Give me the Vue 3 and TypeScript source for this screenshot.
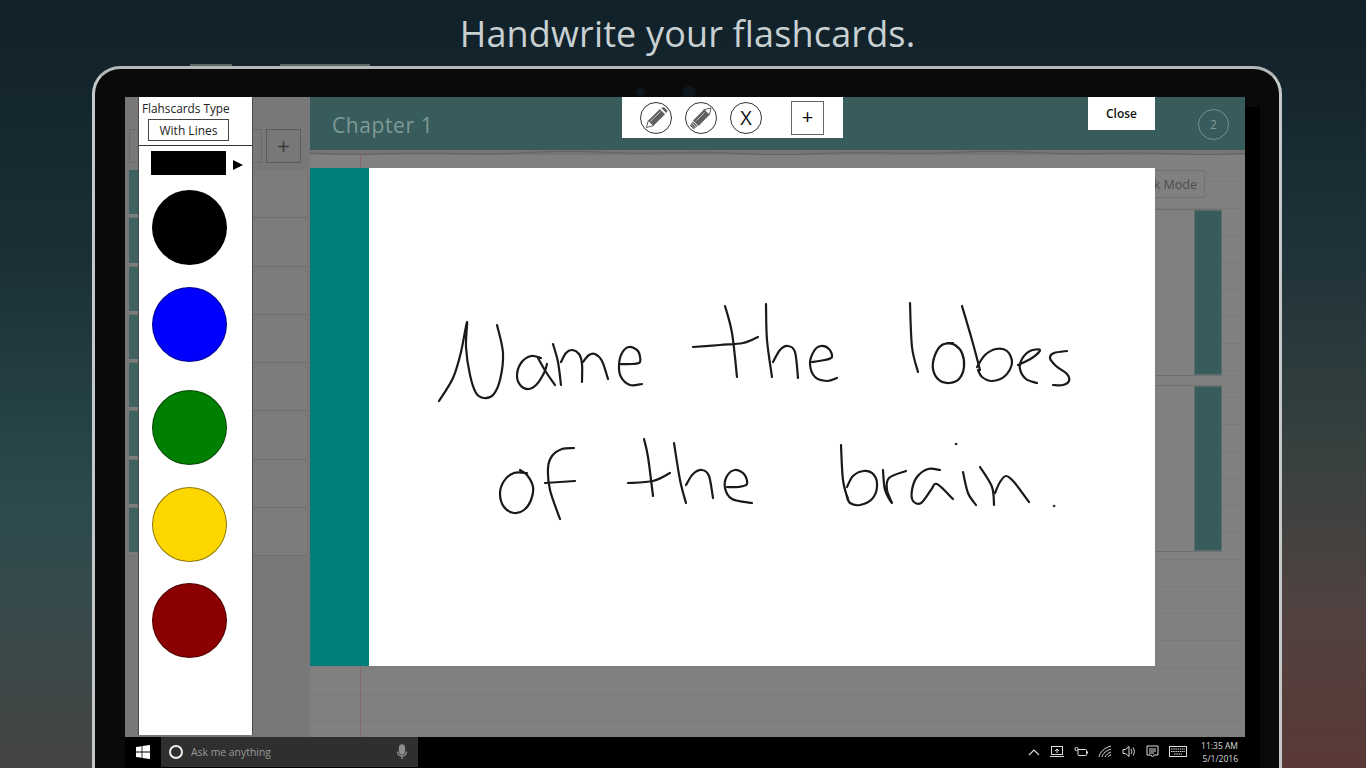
<script setup lang="ts">
type Pt = [number, number]

const rows = Array.from({ length: 8 }, (_, i) => i)
const swatches = ['#000000', '#0000ff', '#008000', '#ffd700', '#8b0000']

// ink strokes, in page coordinates (viewBox lines them up with the card)
const strokes: Pt[][] = [
  // first line
  [[439, 401], [453, 378], [461, 352], [467, 322], [466, 347], [470, 375], [476, 393], [484, 398], [493, 395], [500, 380], [503, 353], [497, 325]],
  [[541, 358], [531, 356], [521, 363], [517, 376], [521, 386], [529, 389], [537, 384], [544, 373], [547, 364]],
  [[538, 358], [546, 372], [555, 385]],
  [[553, 344], [558, 362], [561, 385]],
  [[561, 362], [566, 353], [572, 350], [579, 354], [582, 364], [582, 382]],
  [[583, 362], [589, 355], [595, 354], [602, 361], [608, 379]],
  [[620, 364], [632, 364], [640, 362], [638, 351], [629, 347], [622, 353], [619, 365], [621, 377], [630, 385], [642, 384]],
  [[693, 347], [720, 345], [743, 343], [758, 337]],
  [[725, 306], [732, 333], [737, 377]],
  [[766, 304], [767, 340], [772, 377]],
  [[773, 362], [780, 350], [788, 346], [795, 352], [798, 378]],
  [[812, 362], [825, 360], [832, 357], [829, 349], [821, 346], [814, 351], [810, 364], [815, 377], [827, 381], [837, 378]],
  [[910, 303], [912, 347], [918, 372]],
  [[953, 343], [942, 345], [935, 355], [933, 369], [939, 380], [949, 383], [959, 379], [964, 367], [962, 353], [955, 345], [947, 343]],
  [[962, 306], [972, 340], [980, 370]],
  [[977, 367], [985, 355], [996, 349], [1007, 351], [1012, 363], [1005, 376], [992, 381], [982, 377], [978, 370]],
  [[1018, 365], [1032, 358], [1040, 350], [1030, 351], [1022, 359], [1020, 369], [1026, 379], [1037, 383]],
  [[1067, 351], [1054, 353], [1050, 358], [1056, 366], [1067, 374], [1069, 381], [1063, 385], [1053, 385]],
  // second line
  [[527, 473], [514, 473], [504, 481], [500, 494], [504, 507], [514, 513], [524, 510], [531, 500], [533, 487], [527, 475], [520, 470]],
  [[574, 448], [562, 449], [552, 456], [548, 468], [550, 490], [560, 519]],
  [[545, 483], [575, 481]],
  [[644, 439], [648, 457], [653, 496]],
  [[628, 483], [653, 481], [670, 473]],
  [[674, 443], [680, 480], [686, 503]],
  [[686, 485], [693, 474], [702, 470], [709, 476], [713, 498]],
  [[727, 487], [738, 487], [747, 484], [744, 474], [735, 470], [727, 476], [725, 488], [732, 499], [752, 503]],
  [[841, 445], [843, 480], [848, 500]],
  [[847, 487], [853, 476], [864, 471], [874, 475], [877, 487], [872, 499], [860, 505], [850, 503], [847, 496]],
  [[883, 470], [885, 490], [892, 503], [887, 490], [889, 478], [906, 471]],
  [[940, 470], [928, 469], [917, 477], [912, 490], [913, 501], [921, 503], [931, 490], [937, 484], [953, 499]],
  [[963, 472], [968, 493], [976, 505]],
  [[980, 467], [992, 487], [994, 505]],
  [[995, 493], [1000, 482], [1006, 476], [1014, 482], [1029, 502]],
]

// catmull-rom through the sampled points so strokes don't look faceted
function smooth(pts: Pt[]): string {
  let d = `M${pts[0][0]} ${pts[0][1]}`
  for (let i = 0; i < pts.length - 1; i++) {
    const p0 = pts[i - 1] ?? pts[i]
    const p1 = pts[i]
    const p2 = pts[i + 1]
    const p3 = pts[i + 2] ?? p2
    const c1x = p1[0] + (p2[0] - p0[0]) / 6
    const c1y = p1[1] + (p2[1] - p0[1]) / 6
    const c2x = p2[0] - (p3[0] - p1[0]) / 6
    const c2y = p2[1] - (p3[1] - p1[1]) / 6
    d += ` C${c1x.toFixed(1)} ${c1y.toFixed(1)} ${c2x.toFixed(1)} ${c2y.toFixed(1)} ${p2[0]} ${p2[1]}`
  }
  return d
}

const inkPaths = strokes.map(smooth)

// wobbly line for the torn paper edge under the chapter bar
let tornPath = 'M0 3'
for (let x = 10; x <= 940; x += 10) {
  const y = 3 + Math.sin(x / 23) * 0.8 + Math.sin(x / 61) * 0.9
  tornPath += ` L${x} ${y.toFixed(1)}`
}
</script>

<template>
  <div class="page">
    <h1 class="headline">Handwrite your flashcards.</h1>

    <div class="device">
      <span class="cam small"></span>
      <span class="cam"></span>
      <div class="screen">
        <div class="app">
          <aside class="sidebar">
            <div class="side-top">
              <div class="side-input"></div>
              <div class="side-add">+</div>
            </div>
            <div class="side-list">
              <div v-for="r in rows" :key="r" class="side-row"><span class="side-strip"></span></div>
            </div>
          </aside>

          <main class="main">
            <header class="chapter-bar">
              <span class="chapter-title">Chapter 1</span>
              <span class="chapter-count">2</span>
            </header>
            <svg class="torn" viewBox="0 0 935 5" preserveAspectRatio="none" fill="none" stroke="#626262" stroke-width="1">
              <path :d="tornPath" />
            </svg>
            <div class="notebook">
              <div class="mode-row"><span class="mode-btn">Quick Mode</span></div>
              <div class="deck-card"><span class="deck-strip"></span></div>
              <div class="deck-card tall"><span class="deck-strip"></span></div>
            </div>
          </main>
        </div>

        <footer class="taskbar">
          <div class="start">
            <svg width="16" height="16" viewBox="0 0 16 16" fill="#fff">
              <path d="M1 3l5.6-.8v5.4H1zM7.4 2.1L15 1v6.6H7.4zM1 8.4h5.6v5.4L1 13zM7.4 8.4H15V15l-7.6-1.1z" />
            </svg>
          </div>
          <div class="search">
            <span class="cortana"></span>
            <span class="ask">Ask me anything</span>
            <svg class="mic" width="12" height="16" viewBox="0 0 12 16" fill="none" stroke="#8d8d8d" stroke-width="1.3">
              <rect x="3.5" y="1" width="5" height="9" rx="2.5" fill="#8d8d8d" />
              <path d="M1.5 7.5c0 6 9 6 9 0M6 12.5V15" />
            </svg>
          </div>
          <div class="tray">
            <svg width="12" height="8" viewBox="0 0 12 8" fill="none" stroke="#ddd" stroke-width="1.1"><path d="M1 7l5-5 5 5" /></svg>
            <svg width="14" height="12" viewBox="0 0 14 12" fill="none" stroke="#ddd"><rect x="1.5" y=".5" width="11" height="8" /><path d="M0 10.5h14M7 7V3M5 5l2-2 2 2" /></svg>
            <svg width="14" height="12" viewBox="0 0 14 12" fill="none" stroke="#ddd"><rect x="4" y="3.5" width="8.5" height="6" rx="1" /><path d="M13.5 5.5v2" /><circle cx="2.5" cy="3" r="1.6" /></svg>
            <svg width="14" height="13" viewBox="0 0 14 13" fill="none" stroke="#ddd"><path d="M1 12C2 7 6 3 13 1M4 12c1-4 4-6 9-8M7 12c1-2 3-4 6-5M10 12c.5-1 1.500-2 3-2" /></svg>
            <svg width="14" height="13" viewBox="0 0 14 13" fill="none" stroke="#ddd"><path d="M1 4.500h2.500L7 1.500v10l-3.500-3H1zM9 4c1 1.500 1 3.500 0 5M11 2.500c1.800 2.500 1.800 5.500 0 8" /></svg>
            <svg width="13" height="14" viewBox="0 0 13 14" fill="none" stroke="#ddd"><path d="M1 1h11v9H8l-1.500 2L5 10H1zM3 4h7M3 6h7M3 8h5" /></svg>
            <svg width="18" height="11" viewBox="0 0 18 11" fill="none" stroke="#ddd"><rect x=".5" y=".5" width="17" height="10" /><path d="M2 3h14M2 5.500h14M5 8h8" stroke-dasharray="1.500 .7" /></svg>
            <div class="clock"><span>11:35 AM</span><span>5/1/2016</span></div>
          </div>
        </footer>

        <!-- flyouts sit on top of the dimmed app -->
        <div class="type-panel">
          <div class="type-head">
            <span class="type-label">Flahscards Type</span>
            <span class="type-value">With Lines</span>
          </div>
          <div class="current-row">
            <span class="current-colour"></span>
            <span class="arrow"></span>
          </div>
          <div class="swatches">
            <span v-for="c in swatches" :key="c" class="swatch" :style="{ background: c }"></span>
          </div>
        </div>

        <div class="tools">
          <button class="tool-btn">
            <svg width="32" height="32" viewBox="0 0 32 32">
              <circle cx="16" cy="16" r="15.500" fill="#fff" stroke="#333" />
              <path d="M6.500 25.500l1.800-7L19.800 7l5.200 5.200-11.500 11.500z" fill="#5f5f5f" />
              <path d="M6.500 25.500l1.800-7 5.200 5.200z" fill="#fff" stroke="#555" stroke-width=".9" />
              <path d="M21 5.800l5.200 5.200 .9-1.300c.4-.6.4-1-.1-1.500l-2.700-2.700c-.5-.4-1-.4-1.500 0z" fill="#5f5f5f" />
              <path d="M10.500 19.500l10-10" stroke="#cfcfcf" stroke-width=".9" />
            </svg>
          </button>
          <button class="tool-btn">
            <svg width="32" height="32" viewBox="0 0 32 32">
              <circle cx="16" cy="16" r="15.500" fill="#fff" stroke="#333" />
              <path d="M26 6l-1.600 7L13.500 24l-5.500-5.500L19 7.600z" fill="#5f5f5f" />
              <path d="M26 6l-1.600 7L19 7.600z" fill="#fff" stroke="#555" stroke-width=".9" />
              <path d="M7.500 20l4.500 4.500M6.300 21.500l4.200 4.200M5.300 23l3.700 3.700" stroke="#555" stroke-width="1.300" />
              <path d="M11.500 18.500l8-8" stroke="#cfcfcf" stroke-width=".9" />
            </svg>
          </button>
          <span class="tool-x">X</span>
          <span class="tool-add">+</span>
        </div>

        <button class="close-btn">Close</button>

        <div class="flash-card">
          <span class="flash-strip"></span>
          <svg class="ink" viewBox="310 168 845 498" fill="none" stroke="#1a1a1a" stroke-width="2.200" stroke-linecap="round" stroke-linejoin="round">
            <path v-for="(d, i) in inkPaths" :key="i" :d="d" />
            <circle cx="956" cy="444" r=".9" fill="#1a1a1a" stroke-width=".8" />
            <circle cx="1054" cy="506" r=".9" fill="#444" stroke-width=".8" />
          </svg>
        </div>
      </div>
    </div>
  </div>
</template>

<style>
html,
body {
  margin: 0;
  height: 100%;
  overflow: hidden;
}
</style>

<style scoped>
.page {
  width: 1366px;
  height: 768px;
  display: flex;
  flex-direction: column;
  overflow: hidden;
  font-family: "Open Sans", "Liberation Sans", sans-serif;
  background:
    linear-gradient(180deg, #11212a 0, #13242c 70px, #1a2f35 250px, #2b4a4e 500px, #374a4c 600px, #444442 768px) left / 50% 100% no-repeat,
    linear-gradient(180deg, #11212a 0, #13242c 70px, #1f323a 250px, #36413f 450px, #4f4240 600px, #5a3936 768px) right / 50% 100% no-repeat;
}

.headline {
  height: 66px;
  margin: 0;
  flex: none;
  box-sizing: border-box;
  padding-left: 9px;
  text-align: center;
  font-size: 36px;
  line-height: 68px;
  font-weight: 400;
  letter-spacing: 0.15px;
  color: #c8d0d2;
}

.device {
  position: relative;
  flex: 1;
  width: 1190px;
  margin-left: 92px;
  box-sizing: border-box;
  padding: 28px 34px 0 30px;
  background: #0a0a0a;
  border: 3px solid #c4c8c8;
  border-top-color: #b4b8b8;
  border-bottom: 0;
  border-radius: 28px 28px 0 0;
  display: flex;
}

/* the two hardware buttons poking out of the top edge */
.device::before,
.device::after {
  content: "";
  position: absolute;
  top: -5px;
  height: 2px;
  background: #5f6566;
}

.device::before {
  left: 95px;
  width: 42px;
}

.device::after {
  left: 185px;
  width: 90px;
}

.cam {
  position: absolute;
  top: 17px;
  left: 587px;
  width: 14px;
  height: 14px;
  border-radius: 50%;
  background: #0c161c;
}

.cam.small {
  left: 541px;
  top: 19px;
  width: 9px;
  height: 9px;
}

.screen {
  position: relative;
  flex: 1;
  display: flex;
  flex-direction: column;
  background: #808080;
  box-shadow: 15px 10px 0 #000;
}

.app {
  flex: 1;
  display: flex;
  min-height: 0;
}

.sidebar {
  width: 185px;
  flex: none;
  box-sizing: border-box;
  padding: 32px 4px 0;
  background: #787878;
}

.side-top {
  display: flex;
  gap: 4px;
}

.side-input {
  width: 133px;
  height: 34px;
  box-sizing: border-box;
  border: 1px solid #6a6a6a;
}

.side-add {
  width: 35px;
  height: 34px;
  box-sizing: border-box;
  border: 1px solid #5c5c5c;
  text-align: center;
  font-size: 22px;
  line-height: 30px;
  color: #3a3a3a;
}

.side-list {
  margin-top: 7px;
  margin-right: -1px;
}

.side-row {
  height: 48.250px;
  box-sizing: border-box;
  padding-bottom: 3px;
  border-bottom: 1px solid #6e6e6e;
  background: #7c7c7c;
}

.side-strip {
  display: block;
  width: 9px;
  height: 100%;
  background: #3e625f;
}

.main {
  flex: 1;
  min-width: 0;
  display: flex;
  flex-direction: column;
}

.chapter-bar {
  height: 53px;
  flex: none;
  box-sizing: border-box;
  display: flex;
  align-items: center;
  justify-content: space-between;
  padding: 2px 16px 0 22px;
  background: #385b5b;
}

.chapter-title {
  font-size: 21px;
  letter-spacing: 0.6px;
  color: #7f9a98;
}

.chapter-count {
  width: 29px;
  height: 29px;
  border: 1px solid #6f9490;
  border-radius: 50%;
  text-align: center;
  font-size: 12px;
  line-height: 29px;
  color: #7f9a98;
}

.torn {
  display: block;
  width: 100%;
  height: 5px;
  flex: none;
  background: #757575;
}

.notebook {
  flex: 1;
  box-sizing: border-box;
  padding: 15px 23px 0 0;
  background:
    linear-gradient(#8b666b, #8b666b) 50px 0 / 1px 100% no-repeat,
    repeating-linear-gradient(180deg, #808080 0 26px, #7a7a7a 26px 27px);
}

.mode-row {
  display: flex;
  justify-content: flex-end;
  margin-right: 17px;
}

.mode-btn {
  height: 28px;
  box-sizing: border-box;
  padding: 0 7px;
  border: 1px solid #717171;
  font-size: 12.500px;
  line-height: 27px;
  color: #4c4c4c;
  background: #808080;
}

.deck-card {
  display: flex;
  justify-content: flex-end;
  height: 167px;
  margin-top: 11px;
  border-top: 1px solid #6e6e6e;
  border-bottom: 1px solid #6e6e6e;
  box-sizing: border-box;
  background: #808080;
}

.deck-card.tall {
  margin-top: 9px;
}

.deck-strip {
  width: 28px;
  background: #385b5b;
  box-shadow: inset 0 0 0 1px #5a6f6c;
}

.taskbar {
  height: 31px;
  flex: none;
  display: flex;
  background: #000;
}

.start {
  width: 36px;
  display: flex;
  align-items: center;
  justify-content: center;
  padding-bottom: 2px;
  box-sizing: border-box;
}

.search {
  width: 257px;
  height: 30px;
  box-sizing: border-box;
  display: flex;
  align-items: center;
  padding: 0 10px 0 8px;
  background: #2f2f2f;
}

.cortana {
  width: 10px;
  height: 10px;
  border: 2.500px solid #eee;
  border-radius: 50%;
}

.ask {
  flex: 1;
  margin-left: 8px;
  font-size: 10.400px;
  color: #9a9a9a;
}

.tray {
  flex: 1;
  display: flex;
  align-items: center;
  justify-content: flex-end;
  gap: 10px;
  padding-bottom: 2px;
}

.clock {
  width: 41px;
  display: flex;
  flex-direction: column;
  align-items: flex-end;
  padding-right: 7px;
  font-size: 8.500px;
  line-height: 13px;
  white-space: nowrap;
  color: #ddd;
}

.type-panel {
  position: absolute;
  left: 13px;
  top: 0;
  width: 115px;
  height: 638px;
  box-sizing: border-box;
  display: flex;
  flex-direction: column;
  background: #fff;
  border: solid #4a4a4a;
  border-width: 0 1px;
}

.type-head {
  height: 49px;
  flex: none;
  box-sizing: border-box;
  border-bottom: 1px solid #333;
  padding: 3px 0 0 3px;
  color: #222;
}

.type-label {
  display: block;
  font-size: 11.800px;
  line-height: 17px;
}

.type-value {
  display: block;
  width: 81px;
  height: 22px;
  box-sizing: border-box;
  margin: 2px 0 0 6px;
  border: 1px solid #444;
  text-align: center;
  font-size: 12px;
  line-height: 22px;
}

.current-row {
  display: flex;
  align-items: center;
  margin: 5px 0 0 12px;
  gap: 7px;
}

.current-colour {
  width: 75px;
  height: 24px;
  background: #000;
}

.arrow {
  border-left: 10px solid #000;
  border-top: 5.500px solid transparent;
  border-bottom: 5.500px solid transparent;
  margin-top: 3px;
}

.swatches {
  display: flex;
  flex-direction: column;
  gap: 21.500px;
  margin: 15px 0 0 13px;
}

.swatch {
  width: 75px;
  height: 75px;
  box-sizing: border-box;
  border: 1px solid rgba(0, 0, 0, 0.45);
  border-radius: 50%;
}

/* green sits a little lower in the column than the even spacing */
.swatch:nth-child(3) {
  margin-top: 7px;
}

.tools {
  position: absolute;
  left: 497px;
  top: 0;
  width: 221px;
  height: 41px;
  box-sizing: border-box;
  display: flex;
  align-items: center;
  padding-left: 18px;
  background: #fff;
}

.tool-btn {
  width: 32px;
  height: 32px;
  padding: 0;
  margin-right: 13px;
  border: 0;
  background: none;
}

.tool-btn svg {
  display: block;
}

.tool-x {
  width: 30px;
  height: 30px;
  border: 1px solid #333;
  border-radius: 50%;
  text-align: center;
  font-size: 20px;
  font-weight: 400;
  line-height: 30px;
  color: #111;
}

.tool-add {
  width: 33px;
  height: 34px;
  margin-left: 29px;
  box-sizing: border-box;
  border: 1px solid #666;
  text-align: center;
  font-size: 20px;
  font-weight: 400;
  line-height: 30px;
  color: #000;
}

.close-btn {
  position: absolute;
  left: 963px;
  top: 0;
  width: 67px;
  height: 33px;
  padding: 0;
  border: 0;
  background: #fff;
  font-family: inherit;
  font-size: 12px;
  font-weight: 600;
  color: #111;
}

.flash-card {
  position: absolute;
  left: 185px;
  top: 71px;
  width: 845px;
  height: 498px;
  display: flex;
  background: #fff;
}

.flash-strip {
  width: 59px;
  background: #007f7a;
}

.ink {
  position: absolute;
  inset: 0;
  width: 100%;
  height: 100%;
  filter: blur(0.3px);
}
</style>
